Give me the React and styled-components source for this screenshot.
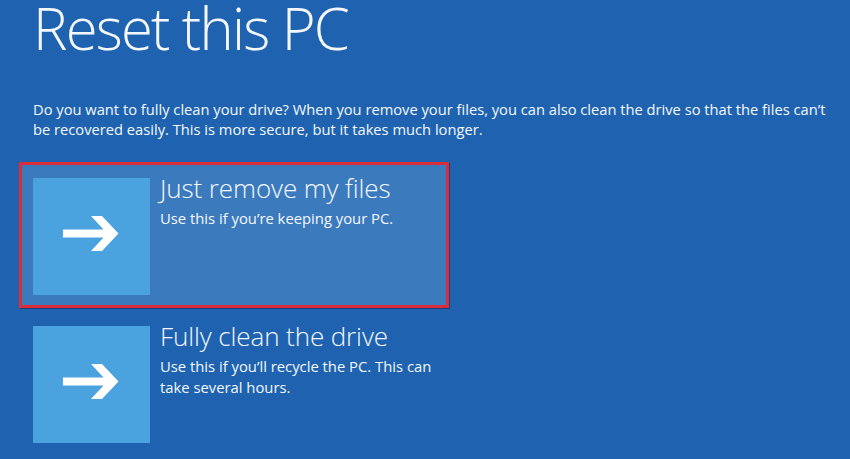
import React from 'react';
import styled, { createGlobalStyle } from 'styled-components';

const GlobalStyle = createGlobalStyle`
    html, body {
        margin: 0;
        padding: 0;
        background: #1f63b0;
    }
    body {
        font-family: "Open Sans", "Noto Sans", "Liberation Sans", sans-serif;
        color: #f4f8fc;
    }
`;

// Whole screen
const Screen = styled.div`
    height: 100vh;
    overflow: hidden;
    box-sizing: border-box;
    padding: 0 0 0 33px;
    background: #1f63b0;
`;

const Title = styled.h1`
    margin: 0;
    font-size: 58px;
    font-weight: 300;
    line-height: 55px;
    letter-spacing: -1.8px;
`;

const Intro = styled.p`
    margin: 44px 0 0;
    width: 805px;
    font-size: 14.7px;
    line-height: 20px;
`;

// Option cards
const OptionList = styled.div`
    margin: 23px 0 0 -14px;
    display: flex;
    flex-direction: column;
    gap: 2px;
`;

const OptionCard = styled.div`
    width: 430px;
    box-sizing: border-box;
    display: flex;
    gap: 10px;
    padding: 13px 11px 10px;
    border: 3px solid ${(p) => (p.$selected ? '#d92d3c' : 'transparent')};
    background: ${(p) => (p.$selected ? '#3c7abe' : 'transparent')};
    box-shadow: ${(p) => (p.$selected ? '1px 1px 0 #1b3e78' : 'none')};
`;

const Tile = styled.div`
    flex: none;
    width: 117px;
    height: 117px;
    background: #4aa3de;
    display: flex;
    align-items: center;
    justify-content: center;
`;

const OptionText = styled.div`
    display: flex;
    flex-direction: column;
`;

const OptionTitle = styled.div`
    font-size: 26px;
    font-weight: 300;
    line-height: 20px;
    letter-spacing: -0.1px;
`;

const OptionDesc = styled.div`
    margin-top: 10px;
    width: 280px;
    font-size: 14.8px;
    line-height: 21px;
`;

const Arrow = () => (
    <svg width="117" height="117" viewBox="0 0 117 117">
        <polygon
            fill="#ffffff"
            points="30,51.5 70.5,51.5 58,38 69,38 85.5,55.5 69,73 58,73 70.5,59.5 30,59.5"
        />
    </svg>
);

const options = [
    {
        title: 'Just remove my files',
        desc: 'Use this if you\u2019re keeping your PC.',
        selected: true,
    },
    {
        title: 'Fully clean the drive',
        desc: 'Use this if you\u2019ll recycle the PC. This can take several hours.',
        selected: false,
    },
];

export default function App() {
    return (
        <>
            <GlobalStyle />
            <Screen>
                <Title>Reset this PC</Title>
                <Intro>
                    Do you want to fully clean your drive? When you remove your files, you can also clean
                    the drive so that the files can&rsquo;t be recovered easily. This is more secure, but it
                    takes much longer.
                </Intro>

                <OptionList>
                    {options.map((o) => (
                        <OptionCard key={o.title} $selected={o.selected}>
                            <Tile>
                                <Arrow />
                            </Tile>
                            <OptionText>
                                <OptionTitle>{o.title}</OptionTitle>
                                <OptionDesc>{o.desc}</OptionDesc>
                            </OptionText>
                        </OptionCard>
                    ))}
                </OptionList>
            </Screen>
        </>
    );
}
